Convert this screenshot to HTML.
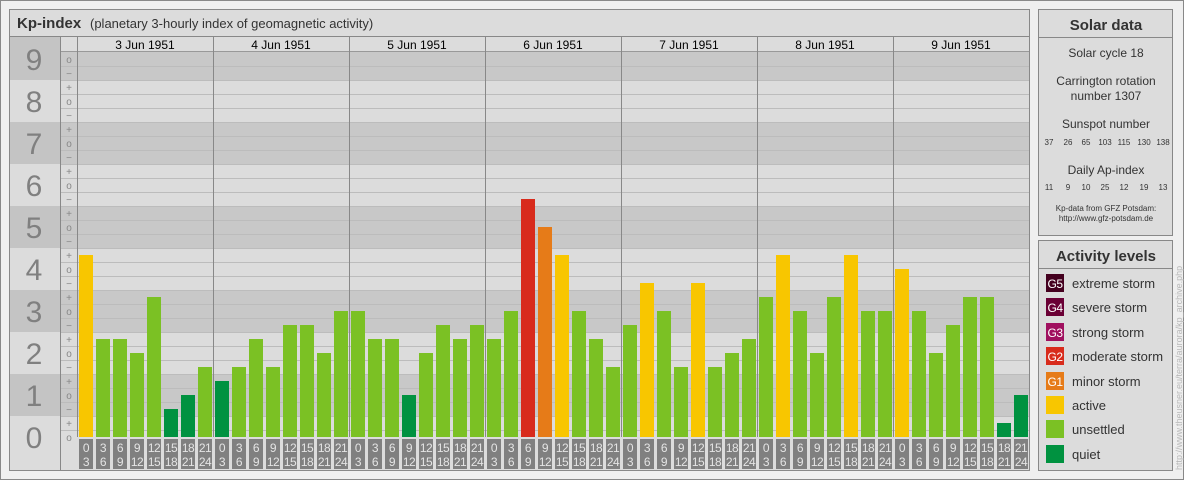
<!DOCTYPE html>
<html><head><meta charset="utf-8"><style>
html,body{margin:0;padding:0;background:#efefef;}
svg{display:block;font-family:"Liberation Sans",Arial,sans-serif;}
</style></head><body>
<svg width="1184" height="480" viewBox="0 0 1184 480" xmlns="http://www.w3.org/2000/svg">
<rect x="0.5" y="0.5" width="1183" height="479" fill="#efefef" stroke="#888"/>
<!-- main panel -->
<rect x="9.5" y="9.5" width="1020" height="461" fill="#dcdcdc" stroke="#888"/>
<line x1="9" y1="36.5" x2="1030" y2="36.5" stroke="#888"/>
<text x="17" y="28" font-size="15" font-weight="bold" fill="#333">Kp-index</text>
<text x="90" y="28" font-size="13" fill="#333">(planetary 3-hourly index of geomagnetic activity)</text>
<!-- bands -->
<g fill="#c8c8c8">
<rect x="9" y="37" width="51" height="43" fill="#c4c4c4"/>
<rect x="9" y="122" width="51" height="42" fill="#c4c4c4"/>
<rect x="9" y="206" width="51" height="42" fill="#c4c4c4"/>
<rect x="9" y="290" width="51" height="42" fill="#c4c4c4"/>
<rect x="9" y="374" width="51" height="42" fill="#c4c4c4"/>
<rect x="60" y="52" width="970" height="28"/>
<rect x="60" y="122" width="970" height="42"/>
<rect x="60" y="206" width="970" height="42"/>
<rect x="60" y="290" width="970" height="42"/>
<rect x="60" y="374" width="970" height="42"/>
</g>
<g stroke="#bcbcbc" stroke-width="1">
<line x1="60" x2="1030" y1="66.5" y2="66.5"/><line x1="60" x2="1030" y1="80.5" y2="80.5"/><line x1="60" x2="1030" y1="94.5" y2="94.5"/><line x1="60" x2="1030" y1="108.5" y2="108.5"/><line x1="60" x2="1030" y1="122.5" y2="122.5"/><line x1="60" x2="1030" y1="136.5" y2="136.5"/><line x1="60" x2="1030" y1="150.5" y2="150.5"/><line x1="60" x2="1030" y1="164.5" y2="164.5"/><line x1="60" x2="1030" y1="178.5" y2="178.5"/><line x1="60" x2="1030" y1="192.5" y2="192.5"/><line x1="60" x2="1030" y1="206.5" y2="206.5"/><line x1="60" x2="1030" y1="220.5" y2="220.5"/><line x1="60" x2="1030" y1="234.5" y2="234.5"/><line x1="60" x2="1030" y1="248.5" y2="248.5"/><line x1="60" x2="1030" y1="262.5" y2="262.5"/><line x1="60" x2="1030" y1="276.5" y2="276.5"/><line x1="60" x2="1030" y1="290.5" y2="290.5"/><line x1="60" x2="1030" y1="304.5" y2="304.5"/><line x1="60" x2="1030" y1="318.5" y2="318.5"/><line x1="60" x2="1030" y1="332.5" y2="332.5"/><line x1="60" x2="1030" y1="346.5" y2="346.5"/><line x1="60" x2="1030" y1="360.5" y2="360.5"/><line x1="60" x2="1030" y1="374.5" y2="374.5"/><line x1="60" x2="1030" y1="388.5" y2="388.5"/><line x1="60" x2="1030" y1="402.5" y2="402.5"/><line x1="60" x2="1030" y1="416.5" y2="416.5"/><line x1="60" x2="1030" y1="430.5" y2="430.5"/>
</g>
<line x1="60" x2="1030" y1="51.5" y2="51.5" stroke="#999"/>
<g stroke="#888">
<line x1="60.5" y1="37" x2="60.5" y2="471"/>
<line x1="77.5" y1="37" x2="77.5" y2="437"/>
<line x1="213.5" y1="37" x2="213.5" y2="437"/>
<line x1="349.5" y1="37" x2="349.5" y2="437"/>
<line x1="485.5" y1="37" x2="485.5" y2="437"/>
<line x1="621.5" y1="37" x2="621.5" y2="437"/>
<line x1="757.5" y1="37" x2="757.5" y2="437"/>
<line x1="893.5" y1="37" x2="893.5" y2="437"/>
</g>
<g font-size="12" fill="#000" text-anchor="middle">
<text x="145" y="49">3 Jun 1951</text><text x="281" y="49">4 Jun 1951</text><text x="417" y="49">5 Jun 1951</text><text x="553" y="49">6 Jun 1951</text><text x="689" y="49">7 Jun 1951</text><text x="825" y="49">8 Jun 1951</text><text x="961" y="49">9 Jun 1951</text>
</g>
<g font-size="30" fill="#808080" text-anchor="middle">
<text x="34" y="70">9</text><text x="34" y="112">8</text><text x="34" y="154">7</text><text x="34" y="196">6</text><text x="34" y="238">5</text><text x="34" y="280">4</text><text x="34" y="322">3</text><text x="34" y="364">2</text><text x="34" y="406">1</text><text x="34" y="448">0</text>
</g>
<g font-size="10" fill="#888" text-anchor="middle">
<text x="69" y="63">o</text><text x="69" y="77">−</text>
<text x="69" y="91">+</text><text x="69" y="105">o</text><text x="69" y="119">−</text>
<text x="69" y="133">+</text><text x="69" y="147">o</text><text x="69" y="161">−</text>
<text x="69" y="175">+</text><text x="69" y="189">o</text><text x="69" y="203">−</text>
<text x="69" y="217">+</text><text x="69" y="231">o</text><text x="69" y="245">−</text>
<text x="69" y="259">+</text><text x="69" y="273">o</text><text x="69" y="287">−</text>
<text x="69" y="301">+</text><text x="69" y="315">o</text><text x="69" y="329">−</text>
<text x="69" y="343">+</text><text x="69" y="357">o</text><text x="69" y="371">−</text>
<text x="69" y="385">+</text><text x="69" y="399">o</text><text x="69" y="413">−</text>
<text x="69" y="427">+</text><text x="69" y="441">o</text>
</g>
<!-- bars -->
<g>
<rect x="79" y="255" width="14" height="182" fill="#f8c600"/>
<rect x="96" y="339" width="14" height="98" fill="#7bc124"/>
<rect x="113" y="339" width="14" height="98" fill="#7bc124"/>
<rect x="130" y="353" width="14" height="84" fill="#7bc124"/>
<rect x="147" y="297" width="14" height="140" fill="#7bc124"/>
<rect x="164" y="409" width="14" height="28" fill="#009240"/>
<rect x="181" y="395" width="14" height="42" fill="#009240"/>
<rect x="198" y="367" width="14" height="70" fill="#7bc124"/>

<rect x="215" y="381" width="14" height="56" fill="#009240"/>
<rect x="232" y="367" width="14" height="70" fill="#7bc124"/>
<rect x="249" y="339" width="14" height="98" fill="#7bc124"/>
<rect x="266" y="367" width="14" height="70" fill="#7bc124"/>
<rect x="283" y="325" width="14" height="112" fill="#7bc124"/>
<rect x="300" y="325" width="14" height="112" fill="#7bc124"/>
<rect x="317" y="353" width="14" height="84" fill="#7bc124"/>
<rect x="334" y="311" width="14" height="126" fill="#7bc124"/>

<rect x="351" y="311" width="14" height="126" fill="#7bc124"/>
<rect x="368" y="339" width="14" height="98" fill="#7bc124"/>
<rect x="385" y="339" width="14" height="98" fill="#7bc124"/>
<rect x="402" y="395" width="14" height="42" fill="#009240"/>
<rect x="419" y="353" width="14" height="84" fill="#7bc124"/>
<rect x="436" y="325" width="14" height="112" fill="#7bc124"/>
<rect x="453" y="339" width="14" height="98" fill="#7bc124"/>
<rect x="470" y="325" width="14" height="112" fill="#7bc124"/>

<rect x="487" y="339" width="14" height="98" fill="#7bc124"/>
<rect x="504" y="311" width="14" height="126" fill="#7bc124"/>
<rect x="521" y="199" width="14" height="238" fill="#d82b1c"/>
<rect x="538" y="227" width="14" height="210" fill="#e67b18"/>
<rect x="555" y="255" width="14" height="182" fill="#f8c600"/>
<rect x="572" y="311" width="14" height="126" fill="#7bc124"/>
<rect x="589" y="339" width="14" height="98" fill="#7bc124"/>
<rect x="606" y="367" width="14" height="70" fill="#7bc124"/>

<rect x="623" y="325" width="14" height="112" fill="#7bc124"/>
<rect x="640" y="283" width="14" height="154" fill="#f8c600"/>
<rect x="657" y="311" width="14" height="126" fill="#7bc124"/>
<rect x="674" y="367" width="14" height="70" fill="#7bc124"/>
<rect x="691" y="283" width="14" height="154" fill="#f8c600"/>
<rect x="708" y="367" width="14" height="70" fill="#7bc124"/>
<rect x="725" y="353" width="14" height="84" fill="#7bc124"/>
<rect x="742" y="339" width="14" height="98" fill="#7bc124"/>

<rect x="759" y="297" width="14" height="140" fill="#7bc124"/>
<rect x="776" y="255" width="14" height="182" fill="#f8c600"/>
<rect x="793" y="311" width="14" height="126" fill="#7bc124"/>
<rect x="810" y="353" width="14" height="84" fill="#7bc124"/>
<rect x="827" y="297" width="14" height="140" fill="#7bc124"/>
<rect x="844" y="255" width="14" height="182" fill="#f8c600"/>
<rect x="861" y="311" width="14" height="126" fill="#7bc124"/>
<rect x="878" y="311" width="14" height="126" fill="#7bc124"/>

<rect x="895" y="269" width="14" height="168" fill="#f8c600"/>
<rect x="912" y="311" width="14" height="126" fill="#7bc124"/>
<rect x="929" y="353" width="14" height="84" fill="#7bc124"/>
<rect x="946" y="325" width="14" height="112" fill="#7bc124"/>
<rect x="963" y="297" width="14" height="140" fill="#7bc124"/>
<rect x="980" y="297" width="14" height="140" fill="#7bc124"/>
<rect x="997" y="423" width="14" height="14" fill="#009240"/>
<rect x="1014" y="395" width="14" height="42" fill="#009240"/>
</g>
<rect x="77" y="437" width="953" height="34" fill="#dcdcdc"/>
<!-- hour labels -->
<g fill="#808080">
<rect x="79" y="439" width="14" height="30"/><rect x="96" y="439" width="14" height="30"/><rect x="113" y="439" width="14" height="30"/><rect x="130" y="439" width="14" height="30"/><rect x="147" y="439" width="14" height="30"/><rect x="164" y="439" width="14" height="30"/><rect x="181" y="439" width="14" height="30"/><rect x="198" y="439" width="14" height="30"/>
<rect x="215" y="439" width="14" height="30"/><rect x="232" y="439" width="14" height="30"/><rect x="249" y="439" width="14" height="30"/><rect x="266" y="439" width="14" height="30"/><rect x="283" y="439" width="14" height="30"/><rect x="300" y="439" width="14" height="30"/><rect x="317" y="439" width="14" height="30"/><rect x="334" y="439" width="14" height="30"/>
<rect x="351" y="439" width="14" height="30"/><rect x="368" y="439" width="14" height="30"/><rect x="385" y="439" width="14" height="30"/><rect x="402" y="439" width="14" height="30"/><rect x="419" y="439" width="14" height="30"/><rect x="436" y="439" width="14" height="30"/><rect x="453" y="439" width="14" height="30"/><rect x="470" y="439" width="14" height="30"/>
<rect x="487" y="439" width="14" height="30"/><rect x="504" y="439" width="14" height="30"/><rect x="521" y="439" width="14" height="30"/><rect x="538" y="439" width="14" height="30"/><rect x="555" y="439" width="14" height="30"/><rect x="572" y="439" width="14" height="30"/><rect x="589" y="439" width="14" height="30"/><rect x="606" y="439" width="14" height="30"/>
<rect x="623" y="439" width="14" height="30"/><rect x="640" y="439" width="14" height="30"/><rect x="657" y="439" width="14" height="30"/><rect x="674" y="439" width="14" height="30"/><rect x="691" y="439" width="14" height="30"/><rect x="708" y="439" width="14" height="30"/><rect x="725" y="439" width="14" height="30"/><rect x="742" y="439" width="14" height="30"/>
<rect x="759" y="439" width="14" height="30"/><rect x="776" y="439" width="14" height="30"/><rect x="793" y="439" width="14" height="30"/><rect x="810" y="439" width="14" height="30"/><rect x="827" y="439" width="14" height="30"/><rect x="844" y="439" width="14" height="30"/><rect x="861" y="439" width="14" height="30"/><rect x="878" y="439" width="14" height="30"/>
<rect x="895" y="439" width="14" height="30"/><rect x="912" y="439" width="14" height="30"/><rect x="929" y="439" width="14" height="30"/><rect x="946" y="439" width="14" height="30"/><rect x="963" y="439" width="14" height="30"/><rect x="980" y="439" width="14" height="30"/><rect x="997" y="439" width="14" height="30"/><rect x="1014" y="439" width="14" height="30"/>
</g>
<g font-size="12" fill="#e4e4e4" text-anchor="middle" letter-spacing="-0.5">
<text x="86" y="452">0</text><text x="86" y="466">3</text><text x="103" y="452">3</text><text x="103" y="466">6</text><text x="120" y="452">6</text><text x="120" y="466">9</text><text x="137" y="452">9</text><text x="137" y="466">12</text><text x="154" y="452">12</text><text x="154" y="466">15</text><text x="171" y="452">15</text><text x="171" y="466">18</text><text x="188" y="452">18</text><text x="188" y="466">21</text><text x="205" y="452">21</text><text x="205" y="466">24</text>
<text x="222" y="452">0</text><text x="222" y="466">3</text><text x="239" y="452">3</text><text x="239" y="466">6</text><text x="256" y="452">6</text><text x="256" y="466">9</text><text x="273" y="452">9</text><text x="273" y="466">12</text><text x="290" y="452">12</text><text x="290" y="466">15</text><text x="307" y="452">15</text><text x="307" y="466">18</text><text x="324" y="452">18</text><text x="324" y="466">21</text><text x="341" y="452">21</text><text x="341" y="466">24</text>
<text x="358" y="452">0</text><text x="358" y="466">3</text><text x="375" y="452">3</text><text x="375" y="466">6</text><text x="392" y="452">6</text><text x="392" y="466">9</text><text x="409" y="452">9</text><text x="409" y="466">12</text><text x="426" y="452">12</text><text x="426" y="466">15</text><text x="443" y="452">15</text><text x="443" y="466">18</text><text x="460" y="452">18</text><text x="460" y="466">21</text><text x="477" y="452">21</text><text x="477" y="466">24</text>
<text x="494" y="452">0</text><text x="494" y="466">3</text><text x="511" y="452">3</text><text x="511" y="466">6</text><text x="528" y="452">6</text><text x="528" y="466">9</text><text x="545" y="452">9</text><text x="545" y="466">12</text><text x="562" y="452">12</text><text x="562" y="466">15</text><text x="579" y="452">15</text><text x="579" y="466">18</text><text x="596" y="452">18</text><text x="596" y="466">21</text><text x="613" y="452">21</text><text x="613" y="466">24</text>
<text x="630" y="452">0</text><text x="630" y="466">3</text><text x="647" y="452">3</text><text x="647" y="466">6</text><text x="664" y="452">6</text><text x="664" y="466">9</text><text x="681" y="452">9</text><text x="681" y="466">12</text><text x="698" y="452">12</text><text x="698" y="466">15</text><text x="715" y="452">15</text><text x="715" y="466">18</text><text x="732" y="452">18</text><text x="732" y="466">21</text><text x="749" y="452">21</text><text x="749" y="466">24</text>
<text x="766" y="452">0</text><text x="766" y="466">3</text><text x="783" y="452">3</text><text x="783" y="466">6</text><text x="800" y="452">6</text><text x="800" y="466">9</text><text x="817" y="452">9</text><text x="817" y="466">12</text><text x="834" y="452">12</text><text x="834" y="466">15</text><text x="851" y="452">15</text><text x="851" y="466">18</text><text x="868" y="452">18</text><text x="868" y="466">21</text><text x="885" y="452">21</text><text x="885" y="466">24</text>
<text x="902" y="452">0</text><text x="902" y="466">3</text><text x="919" y="452">3</text><text x="919" y="466">6</text><text x="936" y="452">6</text><text x="936" y="466">9</text><text x="953" y="452">9</text><text x="953" y="466">12</text><text x="970" y="452">12</text><text x="970" y="466">15</text><text x="987" y="452">15</text><text x="987" y="466">18</text><text x="1004" y="452">18</text><text x="1004" y="466">21</text><text x="1021" y="452">21</text><text x="1021" y="466">24</text>
</g>
<rect x="9.5" y="9.5" width="1020" height="461" fill="none" stroke="#888"/>

<!-- Solar data -->
<rect x="1038.5" y="9.5" width="134" height="226" fill="#dcdcdc" stroke="#888"/>
<line x1="1038" y1="37.5" x2="1173" y2="37.5" stroke="#888"/>
<g text-anchor="middle" fill="#333">
<text x="1106" y="30" font-size="15" font-weight="bold">Solar data</text>
<text x="1106" y="57" font-size="12">Solar cycle 18</text>
<text x="1106" y="85" font-size="12">Carrington rotation</text>
<text x="1106" y="100" font-size="12">number 1307</text>
<text x="1106" y="128" font-size="12">Sunspot number</text>
<text x="1106" y="174" font-size="12">Daily Ap-index</text>
<text x="1106" y="211" font-size="8">Kp-data from GFZ Potsdam:</text>
<text x="1106" y="221" font-size="8">http://www.gfz-potsdam.de</text>
</g>
<g font-size="8" fill="#333" text-anchor="middle">
<text x="1049" y="145">37</text><text x="1068" y="145">26</text><text x="1086" y="145">65</text><text x="1105" y="145">103</text><text x="1124" y="145">115</text><text x="1144" y="145">130</text><text x="1163" y="145">138</text>
<text x="1049" y="190">11</text><text x="1068" y="190">9</text><text x="1086" y="190">10</text><text x="1105" y="190">25</text><text x="1124" y="190">12</text><text x="1144" y="190">19</text><text x="1163" y="190">13</text>
</g>

<!-- Activity levels -->
<rect x="1038.5" y="240.5" width="134" height="230" fill="#dcdcdc" stroke="#888"/>
<line x1="1038" y1="268.5" x2="1173" y2="268.5" stroke="#888"/>
<text x="1106" y="261" font-size="15" font-weight="bold" fill="#333" text-anchor="middle">Activity levels</text>
<rect x="1046" y="274" width="18" height="18" fill="#44001f"/>
<rect x="1046" y="298" width="18" height="18" fill="#6a0035"/>
<rect x="1046" y="323" width="18" height="18" fill="#a0105f"/>
<rect x="1046" y="347" width="18" height="18" fill="#d82b1c"/>
<rect x="1046" y="372" width="18" height="18" fill="#e67b18"/>
<rect x="1046" y="396" width="18" height="18" fill="#f8c600"/>
<rect x="1046" y="420" width="18" height="18" fill="#7bc124"/>
<rect x="1046" y="445" width="18" height="18" fill="#009240"/>
<g font-size="12" fill="#fff" text-anchor="middle" letter-spacing="-0.5">
<text x="1055" y="288">G5</text><text x="1055" y="312">G4</text><text x="1055" y="337">G3</text><text x="1055" y="361">G2</text><text x="1055" y="386">G1</text>
</g>
<g font-size="13" fill="#333">
<text x="1072" y="288">extreme storm</text>
<text x="1072" y="312">severe storm</text>
<text x="1072" y="337">strong storm</text>
<text x="1072" y="361">moderate storm</text>
<text x="1072" y="386">minor storm</text>
<text x="1072" y="410">active</text>
<text x="1072" y="434">unsettled</text>
<text x="1072" y="459">quiet</text>
</g>
<text transform="translate(1182,470) rotate(-90)" font-size="9" fill="#b8b8b8">http://www.theusner.eu/terra/aurora/kp_archive.php</text>
</svg>
</body></html>
